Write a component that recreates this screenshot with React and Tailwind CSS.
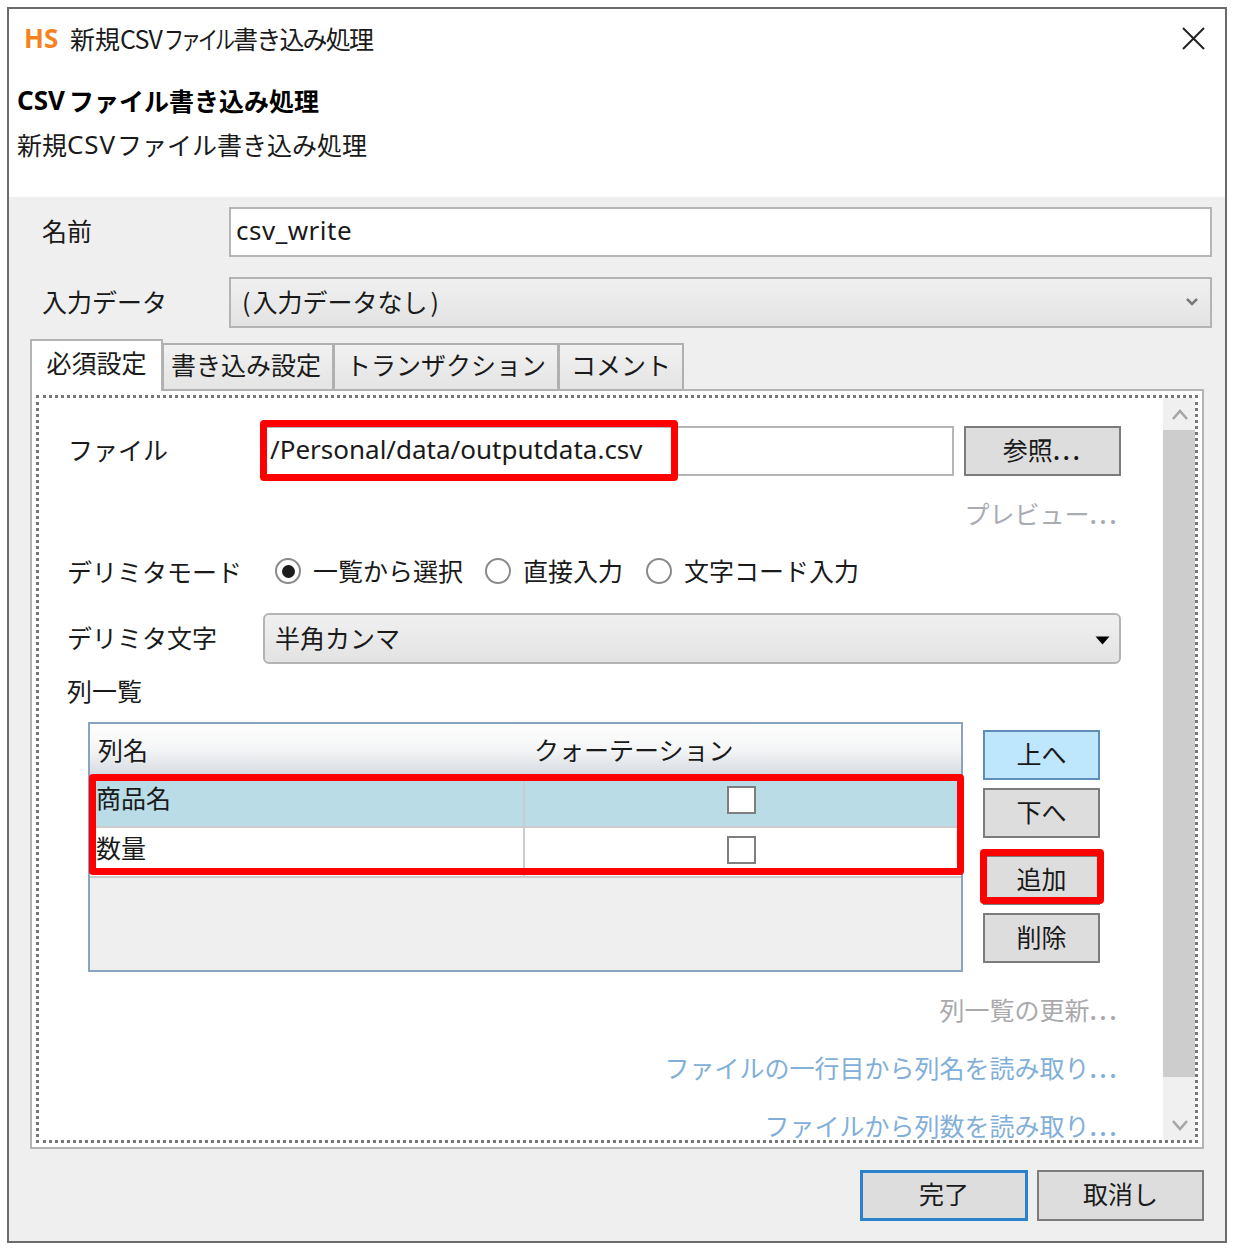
import React, { useState } from 'react';

const tabs = [
  { label: '必須設定', width: 'w-[133px]' },
  { label: '書き込み設定', width: 'w-[172px] pr-[4px]' },
  { label: 'トランザクション', width: 'w-[226px]' },
  { label: 'コメント', width: 'w-[126px]' },
];

const delimiterModes = [
  { label: '一覧から選択', gap: 'mr-[22px]' },
  { label: '直接入力', gap: 'mr-[23px]' },
  { label: '文字コード入力', gap: '' },
];

// Red frame that lies over the part of the form being explained
const Highlight = ({ className }) => (
  <div className={`absolute pointer-events-none border-[7px] border-[#ff0000] rounded-[4px] ${className}`} />
);

const Dots = () => <span className="font-medium tracking-[2.4px]">...</span>;

const Button = ({ children, className = '', tone = 'border-2 border-[#7c7c7c] bg-[#dddddd]' }) => (
  <button className={`flex items-center justify-center pb-[4px] ${tone} ${className}`}>
    {children}
  </button>
);

const Radio = ({ label, checked, onSelect, className }) => (
  <button onClick={onSelect} className={`flex items-center ${className}`}>
    <span className="flex items-center justify-center w-[26px] h-[26px] mr-[12px] rounded-full border-2 border-[#8a8a8a] bg-white">
      {checked && <span className="w-[13px] h-[13px] rounded-full bg-[#1c1c1c]" />}
    </span>
    <span className="pb-[2px]">{label}</span>
  </button>
);

const TitleBar = () => (
  <div className="flex items-center h-[58px] pl-[15px] pr-[20px]">
    <span className="w-[37px] mr-[9px] font-['Noto_Sans'] font-bold text-[26px] text-[#f5821f]">HS</span>
    <span className="flex text-[25px] whitespace-nowrap">
      <span>新規</span>
      <span className="w-[44px] tracking-[-0.8px]">CSV</span>
      <span className="w-[69px] origin-left scale-x-[0.8] tracking-[-3.8px]">ファイル</span>
      <span className="tracking-[-1.8px]">書き込み処理</span>
    </span>
    <svg className="ml-auto" width="23" height="23" viewBox="0 0 23 23" fill="none" stroke="#222" strokeWidth="2">
      <path d="M1 1L22 22M22 1L1 22" />
    </svg>
  </div>
);

const Header = () => (
  <div className="h-[188px] bg-white">
    <TitleBar />
    <div className="flex h-[66px] pl-[8px] pt-[13px] text-[25px] leading-[40px] font-bold text-black">
      <span className="w-[52px] font-['Noto_Sans'] text-[26px]">CSV</span>
      <span>ファイル書き込み処理</span>
    </div>
    <div className="flex -mt-[9px] pl-[8px] text-[25px] leading-[40px]">
      <span>新規</span>
      <span className="w-[50px] font-['Noto_Sans'] text-[26px] tracking-[0.9px]">CSV</span>
      <span>ファイル書き込み処理</span>
    </div>
  </div>
);

const ColumnTable = ({ columns, selected, onSelect, onToggle }) => (
  <div className="relative w-[875px] h-[250px] border-2 border-[#8aa4bd] bg-[#efefef]">
    <div className="flex items-center h-[54px] pb-[4px] bg-linear-to-b from-white via-[#f3f4f5] to-[#d2d8de]">
      <div className="w-[436px] pl-[8px]">列名</div>
      <div className="pl-[8px]">クォーテーション</div>
    </div>
    {columns.map((column, index) => (
      <div
        key={column.name}
        onClick={() => onSelect(index)}
        className={`flex h-[50px] border-b-2 border-[#cccccc] ${index === selected ? 'bg-[#b9dce7]' : 'bg-white'}`}
      >
        <div className="w-[435px] pl-[6px] leading-[38px] border-r-2 border-[#c8cccd]">{column.name}</div>
        <div className="flex flex-1 justify-center pt-[8px] pr-[3px]">
          <button
            onClick={() => onToggle(index)}
            className="w-[29px] h-[28px] border-2 border-[#7f7f7f] bg-white leading-none"
          >
            {column.quoted ? '✓' : ''}
          </button>
        </div>
      </div>
    ))}
    <Highlight className="-left-px top-[50px] w-[875px] h-[101px]" />
  </div>
);

const ScrollBar = () => (
  <div className="flex flex-col w-[32px] bg-[#f0f0f0]">
    <div className="flex items-center justify-center h-[32px] pl-[2px]">
      <svg width="18" height="12" viewBox="0 0 18 12" fill="none" stroke="#a6a6a6" strokeWidth="2.6">
        <path d="M2 11L9 3L16 11" />
      </svg>
    </div>
    <div className="h-[647px] bg-[#cdcdcd]" />
    <div className="flex flex-1 items-end justify-center pl-[2px] pb-[8px]">
      <svg width="18" height="12" viewBox="0 0 18 12" fill="none" stroke="#a6a6a6" strokeWidth="2.6">
        <path d="M2 1L9 9L16 1" />
      </svg>
    </div>
  </div>
);

const App = () => {
  const [activeTab, setActiveTab] = useState(0);
  const [mode, setMode] = useState(0);
  const [selected, setSelected] = useState(0);
  const [columns, setColumns] = useState([
    { name: '商品名', quoted: false },
    { name: '数量', quoted: false },
  ]);

  const toggleQuote = (index) => {
    setColumns(columns.map((c, i) => (i === index ? { ...c, quoted: !c.quoted } : c)));
  };

  return (
    <div className="w-[1234px] h-[1250px] bg-white pl-[7px] pt-[7px] overflow-hidden">
      <div className="flex flex-col w-[1220px] h-[1236px] border-2 border-[#6b6b6b] bg-[#efefef] text-[25px] leading-[36px] text-[#1a1a1a] whitespace-nowrap font-['Noto_Sans_CJK_JP',sans-serif]">
        <Header />

        <div className="flex items-center h-[50px] mt-[10px] pl-[33px]">
          <div className="w-[187px] pb-[4px]">名前</div>
          <div className="flex items-center w-[983px] h-[50px] pl-[5px] pb-[4px] border-2 border-[#b4b5b7] bg-white font-['Noto_Sans'] text-[26px] tracking-[0.5px]">
            csv_write
          </div>
        </div>

        <div className="flex items-center h-[51px] mt-[20px] pl-[33px]">
          <div className="w-[187px] pb-[4px]">入力データ</div>
          <div className="flex items-center w-[983px] h-[51px] pl-[11px] pr-[11px] pb-[2px] border-2 border-[#b4b4b4] bg-linear-to-b from-[#f0f0f0] to-[#e3e3e3]">
            <span className="pb-[2px]">
              <span className="tracking-[2px]">(</span>入力データなし<span className="ml-[3px]">)</span>
            </span>
            <svg className="ml-auto" width="14" height="10" viewBox="0 0 14 10" fill="none" stroke="#7a7a7a" strokeWidth="2.5">
              <path d="M2 2L7 7L12 2" />
            </svg>
          </div>
        </div>

        {/* Tabs */}
        <div className="relative z-10 flex items-end h-[52px] mt-[11px] -mb-[2px] pl-[21px]">
          {tabs.map((tab, index) => (
            <button
              key={tab.label}
              onClick={() => setActiveTab(index)}
              className={
                index === activeTab
                  ? `${tab.width} h-[52px] pb-[9px] border-2 border-b-0 border-[#b4b4b4] bg-white`
                  : `${tab.width} h-[48px] -ml-[1px] pb-[7px] border-2 border-[#b0b0b0] bg-linear-to-b from-[#f1f1f1] to-[#e4e4e4]`
              }
            >
              {tab.label}
            </button>
          ))}
        </div>

        <div className="w-[1174px] h-[760px] ml-[21px] p-[4px] border-2 border-[#b4b4b4] bg-white">
          <div className="flex h-[748px] border-[3px] border-dotted border-[#777777]">
            <div className="flex-1">
              <div className="relative flex items-center h-[50px] mt-[28px] pl-[29px]">
                <div className="w-[195px] pb-[4px]">ファイル</div>
                <div className="flex items-center w-[691px] h-[50px] mr-[10px] pl-[5px] pb-[4px] border-2 border-[#b4b5b7] bg-white font-['Noto_Sans'] text-[26px]">
                  /Personal/data/outputdata.csv
                </div>
                <Button className="w-[157px] h-[50px]">
                  <span>参照<Dots /></span>
                </Button>
                <Highlight className="left-[221px] -top-[6px] w-[418px] h-[61px]" />
              </div>

              <div className="mt-[19px] pr-[44px] text-right text-[#a9abb3]">プレビュー<Dots /></div>

              <div className="flex items-center h-[40px] mt-[20px] pl-[28px]">
                <div className="w-[208px]">デリミタモード</div>
                {delimiterModes.map((item, index) => (
                  <Radio
                    key={item.label}
                    label={item.label}
                    checked={index === mode}
                    onSelect={() => setMode(index)}
                    className={item.gap}
                  />
                ))}
              </div>

              <div className="flex items-center h-[51px] mt-[22px] pl-[28px]">
                <div className="w-[196px] pb-[4px]">デリミタ文字</div>
                <div className="flex items-center w-[858px] h-[51px] pl-[10px] pr-[9px] border-2 border-[#b4b4b4] rounded-[6px] bg-linear-to-b from-[#f0f0f0] to-[#e3e3e3]">
                  <span className="pb-[4px]">半角カンマ</span>
                  <svg className="ml-auto mt-[3px]" width="15" height="9" viewBox="0 0 15 9">
                    <path d="M0.5 0.5H14.5L7.5 8.5Z" fill="#000" />
                  </svg>
                </div>
              </div>

              <div className="mt-[8px] pl-[28px]">列一覧</div>

              <div className="flex mt-[14px] pl-[49px]">
                <ColumnTable columns={columns} selected={selected} onSelect={setSelected} onToggle={toggleQuote} />
                <div className="relative flex flex-col ml-[20px] pt-[8px]">
                  <Button className="w-[117px] h-[50px]" tone="border-2 border-[#5f8fb8] bg-[#bee6fd]">上へ</Button>
                  <Button className="w-[117px] h-[50px] mt-[8px]">下へ</Button>
                  <Button className="w-[117px] h-[50px] mt-[17px]">追加</Button>
                  <Button className="w-[117px] h-[50px] mt-[8px]">削除</Button>
                  <Highlight className="-left-[3px] top-[127px] w-[124px] h-[55px]" />
                </div>
              </div>

              <div className="flex flex-col items-end mt-[19px] pr-[44px] gap-[22px]">
                <span className="text-[#a9a9ac]">列一覧の更新<Dots /></span>
                <span className="text-[#82afd9]">ファイルの一行目から列名を読み取り<Dots /></span>
                <span className="text-[#82afd9]">ファイルから列数を読み取り<Dots /></span>
              </div>
            </div>
            <ScrollBar />
          </div>
        </div>

        <div className="flex justify-end mt-[21px] pr-[21px] gap-[9px]">
          <Button className="w-[168px] h-[51px]" tone="border-[3px] border-[#2b82cb] bg-[#dddddd]">
            <span className="pb-[2px]">完了</span>
          </Button>
          <Button className="w-[167px] h-[51px]">
            <span className="pb-[2px]">取消し</span>
          </Button>
        </div>
      </div>
    </div>
  );
};

export default App;
